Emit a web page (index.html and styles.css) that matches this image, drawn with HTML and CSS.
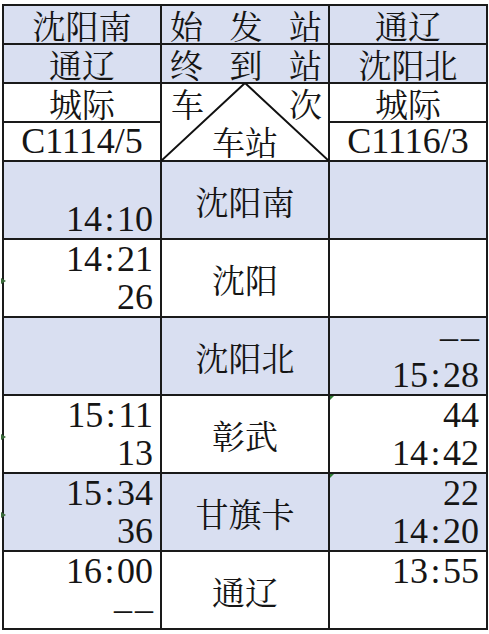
FILE: index.html
```html
<!DOCTYPE html>
<html lang="zh">
<head>
<meta charset="utf-8">
<title>时刻表</title>
<link rel="stylesheet" href="styles.css">
</head>
<body>
<table class="tt">
  <colgroup><col class="c1"><col class="c2"><col class="c3"></colgroup>
  <tr class="hd blue">
    <td class="cn">沈阳南</td>
    <td class="cn"><div class="spread"><span>始</span><span>发</span><span>站</span></div></td>
    <td class="cn">通辽</td>
  </tr>
  <tr class="hd blue">
    <td class="cn">通辽</td>
    <td class="cn"><div class="spread"><span>终</span><span>到</span><span>站</span></div></td>
    <td class="cn">沈阳北</td>
  </tr>
  <tr class="hd">
    <td class="cn">城际</td>
    <td class="diag" rowspan="2">
      <svg class="lines" viewBox="0 0 168 77" preserveAspectRatio="none"><polyline points="0,77 84,0 168,77" fill="none" stroke="#111" stroke-width="2"/></svg>
      <div class="diag-top cn"><span>车</span><span>次</span></div>
      <div class="diag-bot cn">车站</div>
    </td>
    <td class="cn">城际</td>
  </tr>
  <tr class="hd">
    <td class="num ctr">C1114/5</td>
    <td class="num ctr">C1116/3</td>
  </tr>
  <tr class="row blue">
    <td class="num r"><div class="ln"></div><div class="ln">14<span class="c">:</span>10</div></td>
    <td class="cn">沈阳南</td>
    <td class="num r"></td>
  </tr>
  <tr class="row">
    <td class="num r lmark"><div class="ln">14<span class="c">:</span>21</div><div class="ln">26</div></td>
    <td class="cn">沈阳</td>
    <td class="num r"></td>
  </tr>
  <tr class="row blue">
    <td class="num r"></td>
    <td class="cn">沈阳北</td>
    <td class="num r"><div class="ln"><span class="dash">––</span></div><div class="ln">15<span class="c">:</span>28</div></td>
  </tr>
  <tr class="row">
    <td class="num r lmark"><div class="ln">15<span class="c">:</span>11</div><div class="ln">13</div></td>
    <td class="cn">彰武</td>
    <td class="num r mark"><div class="ln">44</div><div class="ln">14<span class="c">:</span>42</div></td>
  </tr>
  <tr class="row blue">
    <td class="num r lmark"><div class="ln">15<span class="c">:</span>34</div><div class="ln">36</div></td>
    <td class="cn">甘旗卡</td>
    <td class="num r mark"><div class="ln">22</div><div class="ln">14<span class="c">:</span>20</div></td>
  </tr>
  <tr class="row">
    <td class="num r"><div class="ln">16<span class="c">:</span>00</div><div class="ln"><span class="dash">––</span></div></td>
    <td class="cn">通辽</td>
    <td class="num r"><div class="ln">13<span class="c">:</span>55</div><div class="ln"></div></td>
  </tr>
</table>
</body>
</html>
```

FILE: styles.css
```css
html, body {
  margin: 0;
  background: #ffffff;
}

.tt {
  border-collapse: collapse;
  table-layout: fixed;
  width: 484px;
  margin: 4px 0 0 2px;
  color: #151515;
}

col.c1 { width: 158px; }
col.c2 { width: 168px; }
col.c3 { width: 158px; }

.tt td {
  border: 2px solid #1a1a1a;
  padding: 0;
  vertical-align: middle;
}

tr.hd td { height: 37px; }
tr.row td { height: 76px; }

tr.blue td { background: #d9dff1; }

.cn {
  font-family: "Noto Serif CJK SC", "Noto Sans CJK SC", serif;
  font-size: 33px;
  line-height: 37px;
  text-align: center;
}

.num {
  font-family: "Liberation Serif", "DejaVu Serif", serif;
  font-size: 36px;
  line-height: 37px;
}

.ctr { text-align: center; }

.r {
  text-align: right;
  padding-right: 7px !important;
  vertical-align: top !important;
}

.ln {
  height: 38px;
  line-height: 38px;
}

.c {
  display: inline-block;
  width: 0.42em;
  text-align: center;
}

.dash {
  letter-spacing: 0.08em;
  margin-right: -0.08em;
  vertical-align: 5px;
}

.spread {
  display: flex;
  justify-content: space-between;
  padding: 0 6px 0 8px;
}

.diag {
  position: relative;
}

.lines {
  position: absolute;
  left: -1px;
  top: -1px;
  width: calc(100% + 2px);
  height: calc(100% + 2px);
  display: block;
}

.diag-top {
  display: flex;
  justify-content: space-between;
  padding: 0 6px 0 9px;
  height: 38px;
}

.diag-bot {
  height: 38px;
}

.mark { position: relative; }
.mark::before {
  content: "";
  position: absolute;
  left: 0;
  top: 0;
  border-top: 4px solid #2e7d32;
  border-right: 4px solid transparent;
}

.lmark { position: relative; }
.lmark::before {
  content: "";
  position: absolute;
  left: -3px;
  top: 38px;
  border-left: 5px solid #3b6b3b;
  border-top: 3px solid transparent;
  border-bottom: 3px solid transparent;
}
```
